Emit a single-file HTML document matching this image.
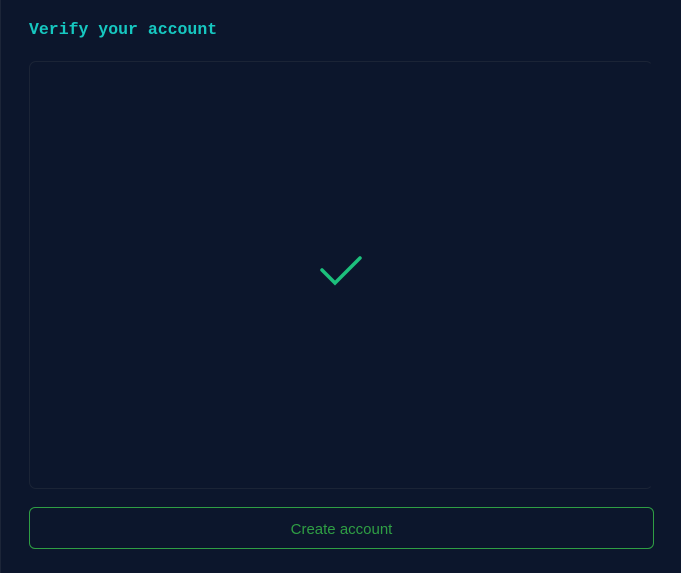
<!DOCTYPE html>
<html><head><style>
html,body{margin:0;padding:0;width:681px;height:573px;background:#0c162c;overflow:hidden}
body{position:relative;font-family:"Liberation Sans",sans-serif}
.lb{position:absolute;left:0;top:0;width:1px;height:573px;background:#1c2538}
h1{position:absolute;left:29px;top:20px;margin:0;font:bold 16.5px "Liberation Mono",monospace;color:#16c7c0}
.box{position:absolute;left:29px;top:61px;width:622px;height:426px;border:1px solid #1b2436;border-radius:7px;border-right-color:transparent}
svg{position:absolute;left:0;top:0}
.btn{position:absolute;left:29px;top:507px;width:623px;height:40px;border:1px solid #2f9e44;border-radius:6px;color:#2f9e44;font-size:15px;line-height:43px;text-align:center}
</style></head><body>
<div class="lb"></div>
<h1>Verify your account</h1>
<div class="box"></div>
<svg width="681" height="573"><path d="M322 270 L335 283 L360 258" fill="none" stroke="#1cc07c" stroke-width="3.5" stroke-linecap="round" stroke-linejoin="miter"/></svg>
<div class="btn">Create account</div>
</body></html>
